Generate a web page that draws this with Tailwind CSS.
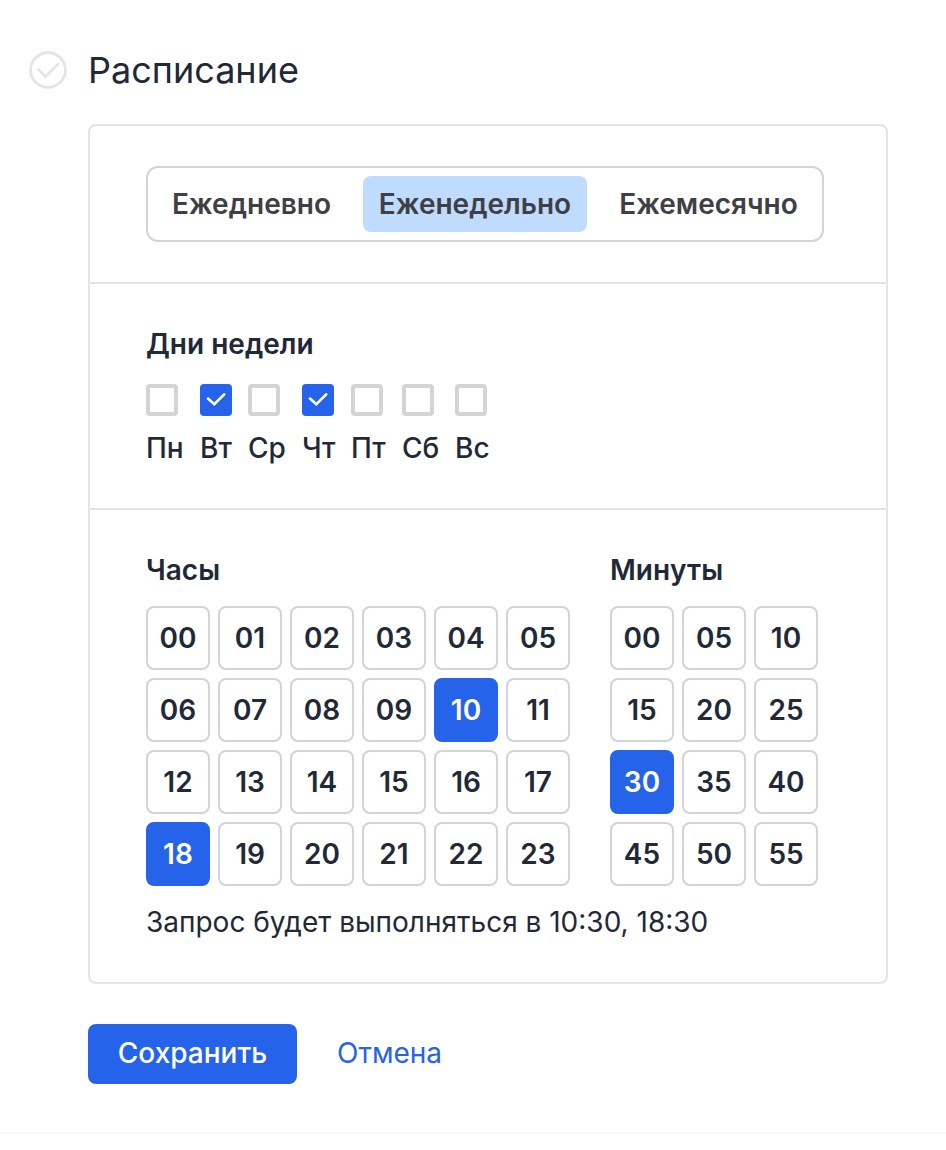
<!DOCTYPE html>
<html lang="ru">
<head>
<meta charset="utf-8">
<title>Расписание</title>
<script src="https://cdn.jsdelivr.net/npm/@tailwindcss/browser@4"></script>
</head>
<body class="bg-white text-[#1f2937] font-[Inter,sans-serif] antialiased h-[1150px] overflow-hidden">
<main class="h-[1134px] border-b-2 border-[#f8f8f8] pt-[46px]">
  <header class="flex items-center h-12 pl-7">
    <svg class="size-10 shrink-0" viewBox="0 0 40 40" fill="none" stroke="#e4e4e4" stroke-width="2.7"><circle cx="20" cy="20" r="17.4"/><path d="M9.7 18.6l7.8 7.9L30.7 13.4"/></svg>
    <h1 class="ml-5 text-[36px] leading-12 whitespace-nowrap">Расписание</h1>
  </header>
  <div class="ml-[88px] mt-[30px] w-[800px] h-[860px] border-2 border-[#e4e4e4] rounded-lg">
    <section class="h-[158px] border-b-2 border-[#e4e4e4] pl-14 pt-10">
      <div class="flex items-center w-[678px] h-[76px] border-2 border-[#d4d4d8] rounded-xl p-2 text-[28px] font-semibold text-[#3f3f46] whitespace-nowrap">
        <div class="w-[191px] text-center">Ежедневно</div>
        <div class="w-56 ml-4 h-14 leading-14 rounded-lg bg-[#bfdbfe] text-center">Еженедельно</div>
        <div class="w-[211px] ml-4 text-center">Ежемесячно</div>
      </div>
    </section>
    <section class="h-[226px] border-b-2 border-[#e4e4e4] pl-14 pt-10">
      <h2 class="text-[28px] leading-10 font-semibold">Дни недели</h2>
      <div id="days" class="flex gap-4 mt-5 text-[28px] leading-10 font-medium"></div>
    </section>
    <section class="pl-14 pt-10">
      <div class="flex gap-10">
        <div><h2 class="text-[28px] leading-10 font-semibold mb-4">Часы</h2><div id="hours" class="grid grid-cols-6 gap-2"></div></div>
        <div><h2 class="text-[28px] leading-10 font-semibold mb-4">Минуты</h2><div id="minutes" class="grid grid-cols-3 gap-2"></div></div>
      </div>
      <p class="mt-4 text-[28px] leading-10">Запрос будет выполняться в 10:30, 18:30</p>
    </section>
  </div>
  <footer class="flex ml-[88px] mt-10 text-[28px] leading-[58px] whitespace-nowrap">
    <button class="w-[209px] h-[60px] pb-0.5 rounded-lg bg-[#2563eb] text-white font-medium">Сохранить</button>
    <button class="ml-10 pb-0.5 text-[#2563eb]">Отмена</button>
  </footer>
</main>
<script>
const days = [['Пн',38],['Вт',32],['Ср',38],['Чт',33],['Пт',35],['Сб',37],['Вс',35]];
document.getElementById('days').innerHTML = days.map(([d,w]) => `<label style="width:${w}px">${d==='Вт'||d==='Чт'
 ? '<span class="flex items-center justify-center size-8 rounded-sm bg-[#2563eb]"><svg class="size-8" viewBox="0 0 32 32" fill="none" stroke="white" stroke-width="2.7" stroke-linecap="round"><path d="M8 14.6l6.3 5.6L24.2 10.4"/></svg></span>'
 : '<span class="block size-8 rounded-sm border-4 border-[#d4d4d8]"></span>'}<span class="block mt-3 whitespace-nowrap">${d}</span></label>`).join('');
const cell = (n, on) => `<div class="size-16 rounded-lg border-2 text-center leading-[60px] text-[28px] font-semibold ${on ? 'bg-[#2563eb] border-[#2563eb] text-white' : 'border-[#d4d4d8]'}">${String(n).padStart(2,'0')}</div>`;
document.getElementById('hours').innerHTML = Array.from({length:24},(_,i)=>cell(i,i===10||i===18)).join('');
document.getElementById('minutes').innerHTML = Array.from({length:12},(_,i)=>cell(i*5,i===6)).join('');
</script>
</body>
</html>
